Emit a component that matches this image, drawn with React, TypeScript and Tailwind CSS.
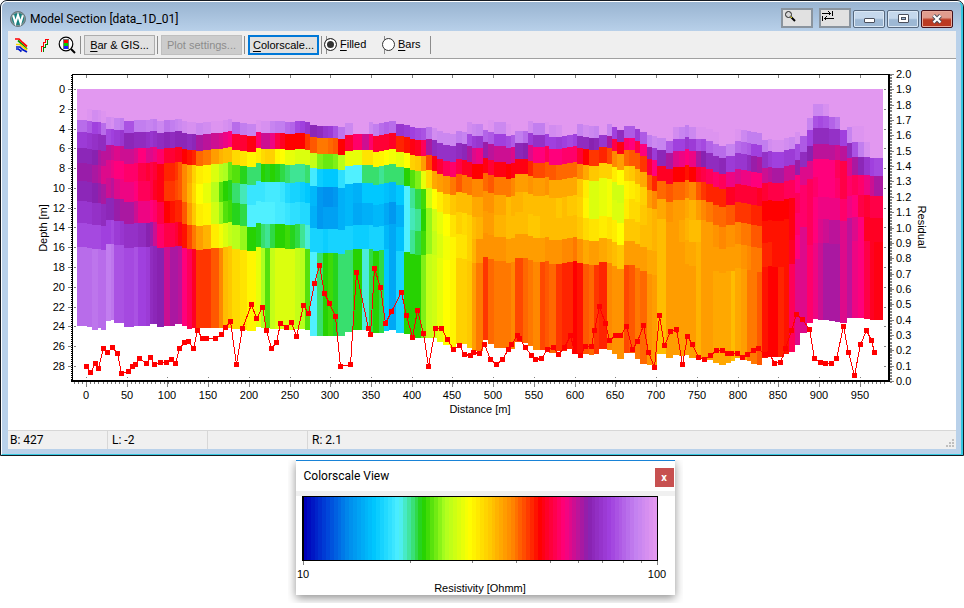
import React from "react";

/* ---------- colour scale ---------- */

const STOPS: [number, number, number, number][] = [
  [0, 0, 0, 184],
  [6, 0, 64, 216],
  [13, 0, 144, 238],
  [20, 0, 200, 255],
  [27, 80, 240, 255],
  [30.5, 60, 226, 130],
  [33.7, 32, 208, 0],
  [40, 172, 255, 32],
  [47, 255, 255, 0],
  [53, 255, 200, 0],
  [59, 255, 136, 0],
  [63, 255, 72, 0],
  [67, 255, 0, 0],
  [74, 255, 0, 124],
  [81, 136, 34, 176],
  [87, 160, 64, 222],
  [94.5, 196, 130, 240],
  [100, 226, 152, 240],
];

function colorAt(v: number): string {
  for (let i = 1; i < STOPS.length; i++) {
    if (v <= STOPS[i][0]) {
      const a = STOPS[i - 1];
      const b = STOPS[i];
      const t = (v - a[0]) / (b[0] - a[0]);
      const mix = (k: 1 | 2 | 3) => Math.round(a[k] + (b[k] - a[k]) * t);
      return `rgb(${mix(1)},${mix(2)},${mix(3)})`;
    }
  }
  return "rgb(226,152,240)";
}

/* ---------- inversion model ---------- */

const LAYER_TOPS = [108, 120, 132, 148, 163, 181, 201, 223, 247];
const SURFACE = 89;
const MODEL_LEFT = 77;

// right edge, depth shift, nine layer values from top to bottom, model bottom
const COLUMNS: number[][] = [
  [87, 0, 100, 92, 86, 82, 80, 82, 85, 88, 92, 326],
  [92, 1, 99, 90, 85, 82, 80, 82, 85, 88, 92, 327],
  [98, 2, 97, 87, 84, 81, 79, 81, 84, 88, 93, 330],
  [101, 2, 98, 88, 83, 79, 78, 80, 84, 88, 92, 328],
  [106, 3, 99, 92, 83, 78, 76, 79, 83, 87, 92, 330],
  [111, -3, 100, 97, 88, 78, 76, 77, 82, 87, 94, 321],
  [114, -3, 100, 98, 87, 77, 75, 78, 82, 88, 93, 320],
  [120, -2, 100, 95, 86, 76, 74, 76, 80, 86, 89, 323],
  [124, -2, 100, 94, 85, 77, 74, 75, 79, 85, 89, 323],
  [134, 1, 100, 89, 82, 77, 73, 75, 79, 84, 88, 327],
  [138, 0, 100, 94, 83, 76, 73, 74, 77, 84, 89, 326],
  [146, 0, 100, 94, 83, 74, 71, 72, 75, 83, 87, 326],
  [150, 0, 100, 95, 84, 76, 70, 72, 75, 81, 86, 326],
  [153, -1, 100, 95, 85, 76, 71, 71, 74, 80, 83, 324],
  [157, -1, 100, 94, 84, 75, 70, 69, 73, 77, 82, 324],
  [164, 1, 100, 96, 83, 73, 68, 68, 71, 73, 81, 327],
  [170, 0, 100, 93, 82, 70, 65, 64, 67, 71, 77, 326],
  [175, 0, 100, 94, 83, 70, 65, 64, 66, 71, 79, 326],
  [178, -1, 100, 95, 82, 69, 64, 63, 65, 70, 79, 324],
  [182, -1, 100, 96, 82, 69, 62, 62, 65, 68, 78, 324],
  [187, 1, 100, 97, 82, 67, 59, 59, 62, 66, 74, 326],
  [192, 2, 100, 98, 83, 66, 56, 55, 57, 63, 72, 329],
  [196, 2, 100, 98, 82, 65, 52, 51, 53, 60, 69, 328],
  [203, 3, 100, 96, 79, 61, 49, 47, 49, 57, 64, 328],
  [211, 2, 100, 97, 78, 60, 48, 45, 48, 55, 64, 328],
  [219, 1, 100, 99, 77, 57, 44, 41, 43, 49, 62, 328],
  [223, 1, 100, 99, 76, 55, 41, 36, 39, 46, 59, 328],
  [228, 0, 100, 98, 75, 54, 40, 34, 36, 44, 54, 327],
  [232, -1, 100, 97, 74, 54, 37, 33, 35, 42, 53, 328],
  [240, 2, 100, 92, 70, 51, 36, 31, 33, 41, 51, 329],
  [247, 3, 100, 94, 70, 50, 33, 29, 32, 39, 50, 330],
  [256, 4, 100, 95, 68, 48, 31, 25, 27, 34, 48, 331],
  [261, 0, 100, 99, 73, 49, 31, 25, 27, 33, 45, 327],
  [265, 1, 100, 98, 77, 51, 34, 25, 27, 31, 40, 328],
  [270, 1, 100, 98, 77, 52, 33, 26, 27, 30, 36, 328],
  [275, 1, 100, 95, 75, 52, 34, 26, 27, 32, 42, 329],
  [280, 1, 100, 94, 71, 48, 33, 26, 26, 34, 44, 329],
  [285, 1, 100, 94, 69, 47, 32, 25, 26, 34, 44, 329],
  [290, 2, 100, 92, 67, 45, 31, 23, 25, 35, 44, 330],
  [295, 2, 100, 91, 67, 45, 30, 22, 24, 33, 44, 330],
  [300, 1, 100, 88, 67, 44, 30, 22, 24, 32, 42, 329],
  [305, 1, 100, 87, 67, 44, 30, 21, 23, 30, 41, 329],
  [310, 2, 100, 85, 64, 44, 31, 20, 23, 28, 36, 330],
  [317, 5, 100, 82, 62, 42, 26, 18, 17, 22, 27, 336],
  [323, 6, 100, 83, 60, 38, 21, 14, 14, 22, 31, 336],
  [328, 6, 100, 85, 60, 37, 20, 13, 15, 21, 34, 336],
  [333, 6, 100, 86, 61, 37, 20, 13, 15, 22, 35, 336],
  [338, 6, 100, 89, 62, 38, 20, 14, 15, 22, 33, 336],
  [345, 7, 100, 93, 67, 41, 24, 17, 17, 22, 31, 336],
  [353, 3, 100, 96, 70, 45, 27, 18, 18, 22, 31, 332],
  [362, 2, 100, 100, 73, 45, 27, 17, 16, 21, 34, 330],
  [369, 2, 100, 100, 77, 50, 31, 20, 17, 21, 28, 330],
  [373, 2, 100, 96, 73, 50, 31, 20, 17, 22, 32, 332],
  [379, 4, 100, 94, 70, 48, 31, 20, 18, 22, 34, 333],
  [384, 3, 100, 92, 70, 48, 30, 20, 18, 22, 32, 333],
  [389, 2, 100, 91, 70, 47, 31, 19, 16, 18, 20, 331],
  [396, 1, 100, 92, 69, 46, 31, 18, 14, 16, 16, 330],
  [404, 4, 100, 85, 65, 45, 31, 20, 17, 19, 22, 333],
  [410, 5, 100, 86, 66, 47, 34, 27, 27, 27, 34, 334],
  [415, 7, 100, 87, 68, 52, 36, 30, 29, 30, 34, 336],
  [421, 8, 100, 88, 69, 53, 38, 32, 30, 32, 34, 338],
  [426, 8, 100, 89, 72, 57, 45, 35, 34, 35, 38, 338],
  [432, 7, 100, 93, 79, 63, 51, 43, 39, 39, 42, 338],
  [437, 8, 100, 97, 83, 68, 56, 47, 43, 42, 43, 338],
  [443, 11, 100, 96, 84, 70, 57, 49, 45, 44, 45, 342],
  [450, 13, 100, 96, 84, 72, 58, 51, 47, 46, 47, 345],
  [456, 14, 100, 96, 84, 73, 60, 53, 50, 48, 48, 348],
  [462, 11, 100, 94, 83, 71, 62, 54, 52, 50, 52, 344],
  [467, 12, 100, 95, 82, 69, 60, 54, 51, 50, 52, 344],
  [472, 14, 97, 88, 79, 69, 60, 54, 52, 52, 53, 348],
  [476, 16, 96, 86, 76, 67, 59, 56, 54, 55, 57, 351],
  [483, 16, 95, 85, 75, 67, 59, 56, 55, 58, 60, 351],
  [488, 10, 100, 91, 80, 68, 61, 58, 57, 58, 64, 340],
  [494, 12, 99, 90, 78, 70, 62, 58, 57, 58, 61, 344],
  [506, 14, 96, 87, 77, 68, 60, 56, 55, 58, 60, 348],
  [511, 16, 99, 88, 77, 67, 60, 54, 54, 57, 60, 349],
  [515, 15, 100, 90, 76, 68, 59, 55, 54, 57, 59, 349],
  [523, 11, 100, 94, 82, 68, 57, 55, 54, 57, 63, 342],
  [528, 11, 100, 92, 81, 68, 57, 54, 54, 57, 61, 343],
  [533, 13, 97, 86, 76, 65, 58, 54, 53, 57, 60, 346],
  [540, 15, 94, 84, 74, 63, 57, 54, 53, 57, 59, 350],
  [545, 15, 94, 84, 74, 63, 57, 54, 54, 57, 63, 350],
  [549, 14, 99, 87, 72, 62, 58, 54, 54, 58, 62, 350],
  [556, 17, 97, 87, 74, 62, 56, 54, 54, 58, 61, 353],
  [562, 17, 98, 86, 74, 61, 56, 53, 54, 58, 64, 351],
  [567, 16, 100, 87, 73, 61, 56, 54, 54, 59, 65, 351],
  [573, 15, 100, 88, 73, 61, 56, 53, 54, 59, 65, 349],
  [577, 14, 100, 87, 73, 61, 56, 53, 54, 60, 67, 349],
  [583, 16, 95, 83, 70, 59, 53, 52, 53, 58, 66, 354],
  [589, 17, 97, 83, 67, 56, 49, 48, 51, 56, 62, 354],
  [594, 18, 96, 81, 64, 53, 44, 44, 50, 57, 61, 355],
  [599, 18, 95, 82, 64, 53, 44, 44, 50, 57, 64, 354],
  [607, 15, 100, 85, 65, 52, 45, 45, 49, 56, 65, 349],
  [612, 16, 95, 79, 63, 52, 46, 46, 50, 55, 59, 350],
  [617, 19, 87, 71, 59, 49, 43, 44, 49, 54, 58, 354],
  [624, 22, 83, 68, 57, 47, 43, 44, 47, 53, 58, 359],
  [629, 18, 90, 73, 61, 52, 48, 49, 53, 57, 63, 353],
  [635, 18, 90, 74, 62, 53, 49, 51, 53, 57, 62, 353],
  [640, 21, 86, 71, 62, 55, 50, 51, 53, 57, 60, 359],
  [647, 24, 90, 74, 64, 56, 52, 53, 54, 57, 61, 364],
  [652, 27, 94, 80, 70, 62, 57, 54, 54, 56, 58, 365],
  [657, 28, 96, 86, 74, 65, 59, 55, 55, 56, 57, 367],
  [666, 18, 100, 95, 82, 69, 61, 56, 54, 54, 54, 354],
  [673, 21, 100, 90, 79, 69, 62, 58, 57, 57, 57, 358],
  [679, 19, 97, 87, 76, 67, 61, 57, 57, 57, 57, 355],
  [685, 19, 95, 87, 75, 67, 61, 57, 56, 57, 57, 356],
  [689, 17, 94, 85, 74, 66, 60, 56, 55, 56, 57, 355],
  [696, 19, 96, 86, 75, 67, 59, 55, 54, 56, 57, 358],
  [701, 19, 99, 89, 79, 70, 62, 57, 54, 55, 55, 358],
  [706, 19, 99, 88, 81, 71, 64, 59, 57, 57, 57, 359],
  [713, 21, 99, 91, 83, 72, 65, 60, 57, 57, 57, 360],
  [719, 24, 99, 92, 83, 73, 65, 61, 58, 57, 56, 363],
  [726, 26, 100, 92, 82, 72, 65, 61, 59, 57, 56, 365],
  [731, 24, 100, 95, 86, 75, 69, 62, 58, 57, 56, 363],
  [735, 24, 100, 95, 86, 75, 69, 62, 58, 57, 54, 361],
  [741, 21, 99, 92, 85, 76, 70, 64, 59, 57, 56, 358],
  [747, 22, 96, 91, 85, 75, 70, 64, 60, 58, 57, 360],
  [751, 23, 94, 90, 83, 75, 70, 64, 60, 59, 60, 361],
  [757, 24, 94, 87, 80, 74, 70, 65, 62, 60, 60, 364],
  [762, 25, 94, 87, 79, 74, 69, 65, 62, 60, 62, 365],
  [768, 20, 100, 94, 84, 77, 70, 67, 66, 65, 66, 358],
  [772, 19, 100, 97, 86, 78, 71, 67, 66, 65, 67, 357],
  [778, 20, 100, 98, 87, 79, 71, 67, 66, 66, 67, 357],
  [784, 20, 100, 98, 87, 79, 71, 67, 66, 66, 65, 357],
  [789, 18, 100, 97, 86, 77, 72, 67, 66, 66, 66, 354],
  [795, 17, 100, 96, 86, 77, 72, 68, 68, 69, 72, 352],
  [800, 12, 100, 98, 88, 80, 74, 72, 73, 74, 76, 345],
  [807, 4, 100, 100, 90, 83, 76, 73, 73, 76, 76, 333],
  [813, -2, 100, 95, 87, 81, 76, 72, 72, 72, 73, 323],
  [818, -4, 96, 89, 83, 78, 74, 73, 74, 74, 75, 319],
  [823, -4, 96, 88, 83, 78, 74, 74, 75, 76, 77, 320],
  [829, -4, 98, 89, 83, 78, 74, 74, 75, 77, 79, 320],
  [835, -3, 100, 91, 84, 78, 74, 74, 75, 78, 79, 321],
  [840, -3, 100, 93, 84, 77, 72, 73, 75, 78, 79, 322],
  [847, -2, 100, 100, 87, 78, 71, 71, 73, 76, 76, 323],
  [852, -5, 100, 100, 95, 83, 76, 73, 75, 78, 78, 318],
  [858, -6, 100, 100, 99, 89, 79, 72, 74, 76, 75, 318],
  [864, -6, 100, 100, 99, 94, 82, 73, 71, 74, 74, 318],
  [870, -6, 100, 100, 100, 98, 85, 75, 70, 69, 71, 319],
  [874, -5, 100, 100, 100, 100, 87, 77, 71, 69, 69, 320],
  [883, -5, 100, 100, 100, 100, 88, 79, 71, 69, 68, 320],
];

const RESIDUALS: [number, number][] = [
  [86, 366], [90, 372], [95, 363], [98, 368], [103, 348], [107, 352], [112, 347], [117, 353],
  [121, 373], [128, 371], [132, 366], [135, 364], [139, 358], [146, 363], [150, 357], [154, 364],
  [160, 362], [166, 362], [171, 359], [175, 363], [179, 348], [184, 342], [188, 341], [193, 348],
  [197, 330], [202, 338], [206, 338], [215, 338], [221, 334], [225, 327], [230, 321], [236, 364],
  [242, 328], [251, 304], [256, 318], [262, 307], [266, 330], [271, 348], [276, 342], [280, 323],
  [286, 327], [291, 322], [296, 336], [303, 305], [308, 313], [314, 283], [319, 265], [324, 293],
  [329, 303], [335, 316], [340, 366], [350, 364], [356, 272], [368, 328], [370, 334], [374, 268],
  [380, 287], [385, 323], [391, 311], [401, 292], [406, 315], [412, 337], [417, 310], [423, 333],
  [428, 366], [435, 328], [441, 328], [447, 339], [453, 349], [459, 345], [464, 354], [470, 355],
  [473, 352], [479, 353], [484, 344], [490, 359], [496, 364], [502, 359], [508, 349], [511, 344],
  [517, 335], [519, 338], [525, 347], [531, 355], [535, 359], [541, 358], [547, 349], [553, 347],
  [558, 354], [564, 347], [570, 335], [574, 351], [580, 355], [585, 346], [591, 346], [594, 330],
  [599, 306], [605, 323], [609, 340], [615, 335], [620, 335], [626, 326], [632, 349], [637, 341],
  [643, 325], [648, 352], [654, 367], [659, 315], [664, 345], [670, 331], [676, 329], [682, 364],
  [687, 336], [692, 344], [698, 357], [704, 359], [710, 355], [716, 350], [722, 350], [727, 353],
  [731, 353], [737, 353], [742, 357], [747, 354], [753, 350], [758, 348], [764, 354], [769, 353],
  [774, 363], [780, 362], [785, 348], [791, 330], [796, 314], [802, 319], [809, 329], [814, 358],
  [820, 362], [825, 363], [831, 363], [836, 358], [843, 326], [848, 352], [854, 375], [860, 344],
  [866, 330], [871, 340], [874, 352],
];

const range = (n: number) => Array.from({ length: n }, (_, i) => i);
const distanceX = (m: number) => Math.round(86 + m * 0.8144);
const depthY = (m: number) => Math.round(89 + m * 9.89);
const residualY = (r: number) => Math.round(381 - r * 153.5);

function ModelCells() {
  return (
    <g>
      <rect x={MODEL_LEFT} y={SURFACE} width={806} height={60} fill={colorAt(100)} />
      {COLUMNS.map((column, i) => {
        const left = i === 0 ? MODEL_LEFT : COLUMNS[i - 1][0];
        const width = column[0] - left;
        const shift = column[1];
        const values = [100, ...column.slice(2, 11)];
        const tops = [SURFACE, ...LAYER_TOPS.map((t) => t + shift), column[11]];
        return values.map((v, k) => (
          <rect key={`${i}-${k}`} x={left} y={tops[k]} width={width} height={tops[k + 1] - tops[k]} fill={colorAt(v)} />
        ));
      })}
    </g>
  );
}

function SectionPlot() {
  return (
    <svg
      viewBox="8 59 948 371"
      className="block w-full font-['Liberation_Sans',Arial,sans-serif] text-[11px]"
      shapeRendering="crispEdges"
      role="img"
      aria-label="Resistivity section with residuals"
    >
      <ModelCells />
      <path d="M72 74.5H890" stroke="#000" />
      <path d="M72.5 74V382" stroke="#000" />
      <path d="M71.5 75V381" stroke="#000" strokeDasharray="1 1" />
      <path d="M71 381H890" stroke="#000" strokeWidth="2" />
      <path d="M889 74V382" stroke="#000" strokeWidth="2" />
      {range(200).map((i) => {
        const x = 74 + Math.round(i * 4.072);
        return x < 888 ? <rect key={i} x={x} y={382} width={1} height={2} fill="#777" /> : null;
      })}
      {range(20).map((i) => {
        const x = distanceX(i * 50);
        return (
          <g key={i}>
            <rect x={x} y={75} width={1} height={3} fill="#808080" />
            <rect x={x} y={377} width={1} height={1} fill="#808080" />
            <rect x={x} y={382} width={1} height={5} fill="#808080" />
            <text x={x} y={399} textAnchor="middle">{i * 50}</text>
          </g>
        );
      })}
      {range(15).map((i) => {
        const y = depthY(i * 2);
        return (
          <g key={i}>
            <rect x={68} y={y} width={3} height={1} fill="#808080" />
            <rect x={74} y={y} width={2} height={1} fill="#808080" />
            <rect x={884} y={y} width={2} height={1} fill="#808080" />
            <text x={65} y={y + 4} textAnchor="end">{i * 2}</text>
          </g>
        );
      })}
      {range(102).map((i) => (
        <rect key={i} x={890} y={74 + Math.round(i * 3.04)} width={2} height={2} fill="#808080" />
      ))}
      {range(21).map((i) => {
        const y = residualY(i / 10);
        return (
          <g key={i}>
            <rect x={890} y={y} width={4} height={1} fill="#808080" />
            <text x={896} y={y + 4}>{(i / 10).toFixed(1)}</text>
          </g>
        );
      })}
      <text x={480} y={413} textAnchor="middle">Distance [m]</text>
      <text transform="translate(47 228) rotate(-90)" textAnchor="middle">Depth [m]</text>
      <text transform="translate(918 227) rotate(90)" textAnchor="middle">Residual</text>
      <polyline points={RESIDUALS.map(([x, y]) => `${x + 0.5},${y + 0.5}`).join(" ")} fill="none" stroke="#f00" />
      {RESIDUALS.map(([x, y], i) => (
        <rect key={i} x={x - 2} y={y - 2} width={5} height={5} fill="#f00" />
      ))}
    </svg>
  );
}

/* ---------- icons ---------- */

function LogoIcon() {
  return (
    <svg viewBox="0 0 16 16" className="mt-1 size-4 shrink-0" aria-hidden="true">
      <circle cx="8" cy="8" r="7.5" fill="#7f9295" stroke="#66777b" />
      <circle cx="8" cy="8" r="6" fill="#16827f" />
      <path d="M3.2 4.2 5.4 12 8 4 10.6 12 12.8 4.2" fill="none" stroke="#fff" strokeWidth="2" />
    </svg>
  );
}

function CurvesIcon() {
  return (
    <svg viewBox="0 0 14 16" className="h-4 w-3.5" fill="none" strokeWidth="1.700" aria-hidden="true">
      <path d="M4 3.500 8 7l5 5" stroke="#009a00" />
      <path d="M1 2h4l3.500 3.500L13 9.500" stroke="#f00" />
      <path d="M2 7.500h4L13 13" stroke="#f5d800" />
      <path d="M2 10h4l2.500 2.500L13 15" stroke="#0018c8" />
      <path d="M2 12h2.500l3 2.500" stroke="#0018c8" />
    </svg>
  );
}

function StepsIcon() {
  return (
    <svg viewBox="0 0 10 16" className="h-4 w-2.5" shapeRendering="crispEdges" fill="none" aria-hidden="true">
      <path d="M1.500 15V9.500H3.500V5.500H5.500V2.500H9" stroke="#f00" />
      <path d="M3.500 15V10.500H5.500V7.500H7.500V3" stroke="#008000" />
    </svg>
  );
}

function ScaleZoomIcon() {
  return (
    <svg viewBox="0 0 18 18" className="size-[18px]" aria-hidden="true">
      <circle cx="8" cy="8" r="6.8" fill="#fff" stroke="#000" strokeWidth="1.200" />
      <path d="m13 13 4 4" stroke="#000" strokeWidth="2" />
      <g shapeRendering="crispEdges">
        <rect x="5" y="3" width="6" height="10" fill="#777" />
        <rect x="6" y="4" width="4" height="3" fill="#f00" />
        <rect x="6" y="7" width="4" height="3" fill="#00d000" />
        <rect x="6" y="10" width="4" height="3" fill="#2020ff" />
      </g>
    </svg>
  );
}

/* ---------- small controls ---------- */

const Separator = ({ className = "" }: { className?: string }) => (
  <div className={`h-[18px] w-px shrink-0 bg-[#8c8c8c] ${className}`} />
);

function Hot({ text }: { text: string }) {
  return (
    <span>
      <span className="underline underline-offset-2">{text[0]}</span>
      {text.slice(1)}
    </span>
  );
}

const CAPTION_BUTTON =
  "flex h-[18px] w-8 items-center justify-center rounded-[2px] border border-[#57697f] bg-linear-to-b from-[#c5d8ec] from-45% to-[#9db8d4] to-55% inset-ring inset-ring-[#dbe8f5]";
const FLAT_CAPTION_BUTTON = "h-5 w-8 border-2 border-[#8a949e] bg-[#e1e1e1] pl-px";

function TitleBar() {
  return (
    <header className="flex h-[29px] items-center pl-1">
      <LogoIcon />
      <h1 className="mt-1 ml-1 grow font-[Roboto,'Noto_Sans',sans-serif] text-[12px] leading-4">
        Model Section [data_1D_01]
      </h1>
      <div className="mt-0.5 flex items-center pr-[5px]">
        <button type="button" aria-label="Zoom" className={FLAT_CAPTION_BUTTON}>
          <svg viewBox="0 0 12 12" className="-mt-1 size-3">
            <circle cx="4.500" cy="4.500" r="3" fill="#d8d8d8" stroke="#222" />
            <path d="m7 7 4 4" stroke="#000" strokeWidth="2" />
            <path d="m6.500 6.500 1.500 1.500" stroke="#e8d800" />
          </svg>
        </button>
        <button type="button" aria-label="Swap direction" className={`${FLAT_CAPTION_BUTTON} mr-0.5 ml-1.5`}>
          <svg viewBox="0 0 12 12" className="-mt-1 size-3" fill="none" stroke="#000" shapeRendering="crispEdges">
            <path d="M0 3.500h9M6.500 1.500l2 2-2 2M10.500 1v5M12 8.500H2M4.500 6.500l-2 2 2 2M.5 6v5" />
          </svg>
        </button>
        <button type="button" aria-label="Minimize" className={`${CAPTION_BUTTON} mt-0.5`}>
          <span className="mt-1 h-[5px] w-[11px] rounded-[1px] border border-[#4a4f5c] bg-white" />
        </button>
        <button type="button" aria-label="Maximize" className={`${CAPTION_BUTTON} mt-0.5 ml-0.5`}>
          <span className="flex h-[9px] w-[11px] items-center justify-center rounded-[1px] border border-[#4a4f5c] bg-white">
            <span className="h-[3px] w-[5px] border border-[#4a4f5c] bg-[#9db8d4]" />
          </span>
        </button>
        <button
          type="button"
          aria-label="Close"
          className="mt-0.5 ml-0.5 flex h-[18px] w-8 items-center justify-center rounded-[2px] border border-[#43101a] bg-linear-to-b from-[#e09c8e] from-40% to-[#bb3a22] to-55% inset-ring inset-ring-[#e8aa9c]"
        >
          <svg viewBox="0 0 12 10" className="h-2.5 w-3">
            <path d="m2.500 1.500 7 7m0-7-7 7" stroke="#4a4f5c" strokeWidth="4" />
            <path d="m2.500 1.500 7 7m0-7-7 7" stroke="#fff" strokeWidth="2.200" />
          </svg>
        </button>
      </div>
    </header>
  );
}

function RadioOption({ label, checked }: { label: string; checked?: boolean }) {
  return (
    <label className="flex h-[18px] shrink-0 items-center border-l border-[#8c8c8c]">
      <input
        type="radio"
        name="display"
        defaultChecked={checked}
        className="mr-[3px] -ml-[3px] size-[13px] appearance-none rounded-full border border-[#333] bg-white checked:bg-[#333] checked:shadow-[inset_0_0_0_2px_#fff]"
      />
      <Hot text={label} />
    </label>
  );
}

function Toolbar() {
  return (
    <div className="flex h-7 items-center border-b border-[#a0a0a0] bg-[#efefef] pl-1.5 font-['Liberation_Sans',Arial,sans-serif] text-[11px]">
      <button type="button" aria-label="Curves"><CurvesIcon /></button>
      <button type="button" aria-label="Steps" className="ml-3"><StepsIcon /></button>
      <button type="button" aria-label="Zoom colorscale" className="ml-2"><ScaleZoomIcon /></button>
      <Separator className="ml-1" />
      <button type="button" className="ml-[3px] h-5 w-[71px] shrink-0 border border-[#adadad] bg-[#e1e1e1] leading-4 whitespace-nowrap">
        <Hot text="Bar & GIS..." />
      </button>
      <Separator className="ml-0.5" />
      <button type="button" disabled className="ml-[3px] h-5 w-[81px] shrink-0 border border-[#bfbfbf] bg-[#cccccc] leading-4 whitespace-nowrap text-[#8c8c8c]">
        Plot settings...
      </button>
      <Separator className="ml-0.5" />
      <button type="button" className="ml-[3px] h-5 w-[71px] shrink-0 border-2 border-[#0078d7] bg-[#e1e1e1] leading-4 whitespace-nowrap">
        <Hot text="Colorscale..." />
      </button>
      <Separator className="mr-1 ml-0.5" />
      <div className="w-[58px] shrink-0"><RadioOption label="Filled" checked /></div>
      <div className="w-[46px] shrink-0"><RadioOption label="Bars" /></div>
      <Separator />
    </div>
  );
}

function StatusBar() {
  return (
    <footer className="flex h-[19px] items-stretch border-t border-[#d7d7d7] bg-[#f0f0f0] font-[Roboto,'Noto_Sans',sans-serif] text-[12px] leading-[19px]">
      <div className="w-[100px] border-r border-[#d7d7d7] pl-0.5">B: 427</div>
      <div className="w-[100px] border-r border-[#d7d7d7] pl-1">L: -2</div>
      <div className="w-[100px] border-r border-[#d7d7d7]" />
      <div className="grow pl-1">R: 2.1</div>
      <svg viewBox="0 0 8 8" className="mr-0.5 mb-0.5 size-2 self-end" fill="#bfbfbf" shapeRendering="crispEdges" aria-hidden="true">
        <path d="M6 0h2v2H6zM3 3h2v2H3zM6 3h2v2H6zM0 6h2v2H0zM3 6h2v2H3zM6 6h2v2H6z" />
      </svg>
    </footer>
  );
}

function ColorscaleWindow() {
  const steps = 92;
  const decadeX = (v: number) => Math.round(7 + Math.log10(v) * 354);
  return (
    <div className="mx-auto w-[395px] overflow-hidden px-2 pb-2">
      <section className="border-t border-[#1883d7] bg-white shadow-[0_3px_9px_#00000070]">
        <header className="flex h-[30px] items-center pl-2 font-[Roboto,'Noto_Sans',sans-serif]">
          <h2 className="grow text-[12px] leading-4">Colorscale View</h2>
          <button type="button" aria-label="Close colorscale" className="mt-[3px] mr-px size-[19px] bg-[#c75050] text-[11px] leading-4 font-bold text-white">
            x
          </button>
        </header>
        <div className="h-[5px] bg-[#f0f0f0]" />
        <svg
          viewBox="0 0 379 99"
          className="block w-full font-['Liberation_Sans',Arial,sans-serif] text-[11px]"
          shapeRendering="crispEdges"
          role="img"
          aria-label="Resistivity colour scale from 10 to 100 Ohmm"
        >
          {range(steps).map((i) => (
            <rect
              key={i}
              x={7 + Math.round((i * 354) / steps)}
              y={0}
              width={5}
              height={65}
              fill={colorAt((i * 100) / (steps - 1))}
            />
          ))}
          <rect x={362} y={0} width={8} height={65} fill="#fff" />
          <path d="M6 .5H362M6 64.500H362M361.500 0V65" stroke="#000" />
          <path d="M7 0V65" stroke="#000" strokeWidth="2" />
          {range(9).map((i) => (
            <rect key={i} x={decadeX(i + 2)} y={65} width={1} height={i === 8 ? 4 : 2} fill="#808080" />
          ))}
          <rect x={7} y={65} width={1} height={4} fill="#808080" />
          <text x={7} y={82} textAnchor="middle">10</text>
          <text x={361} y={82} textAnchor="middle">100</text>
          <text x={184} y={96} textAnchor="middle">Resistivity [Ohmm]</text>
        </svg>
      </section>
    </div>
  );
}

export default function App() {
  return (
    <div className="w-full bg-white text-black">
      <main className="overflow-hidden rounded-t-[7px] border border-[#151a22] bg-[#b9d1ea]">
        <div className="rounded-t-[6px] border border-r-2 border-white border-r-[#35c8e0] border-b-[#35c8e0] bg-linear-to-b from-[#99b4d1] to-[#b9d1ea] to-[30px] pr-[5px] pb-[5px] pl-1.5">
          <div className="-mx-0.5"><TitleBar /></div>
          <Toolbar />
          <div className="bg-white"><SectionPlot /></div>
          <StatusBar />
        </div>
      </main>
      <div className="pt-1 pl-1.5">
        <ColorscaleWindow />
      </div>
    </div>
  );
}
